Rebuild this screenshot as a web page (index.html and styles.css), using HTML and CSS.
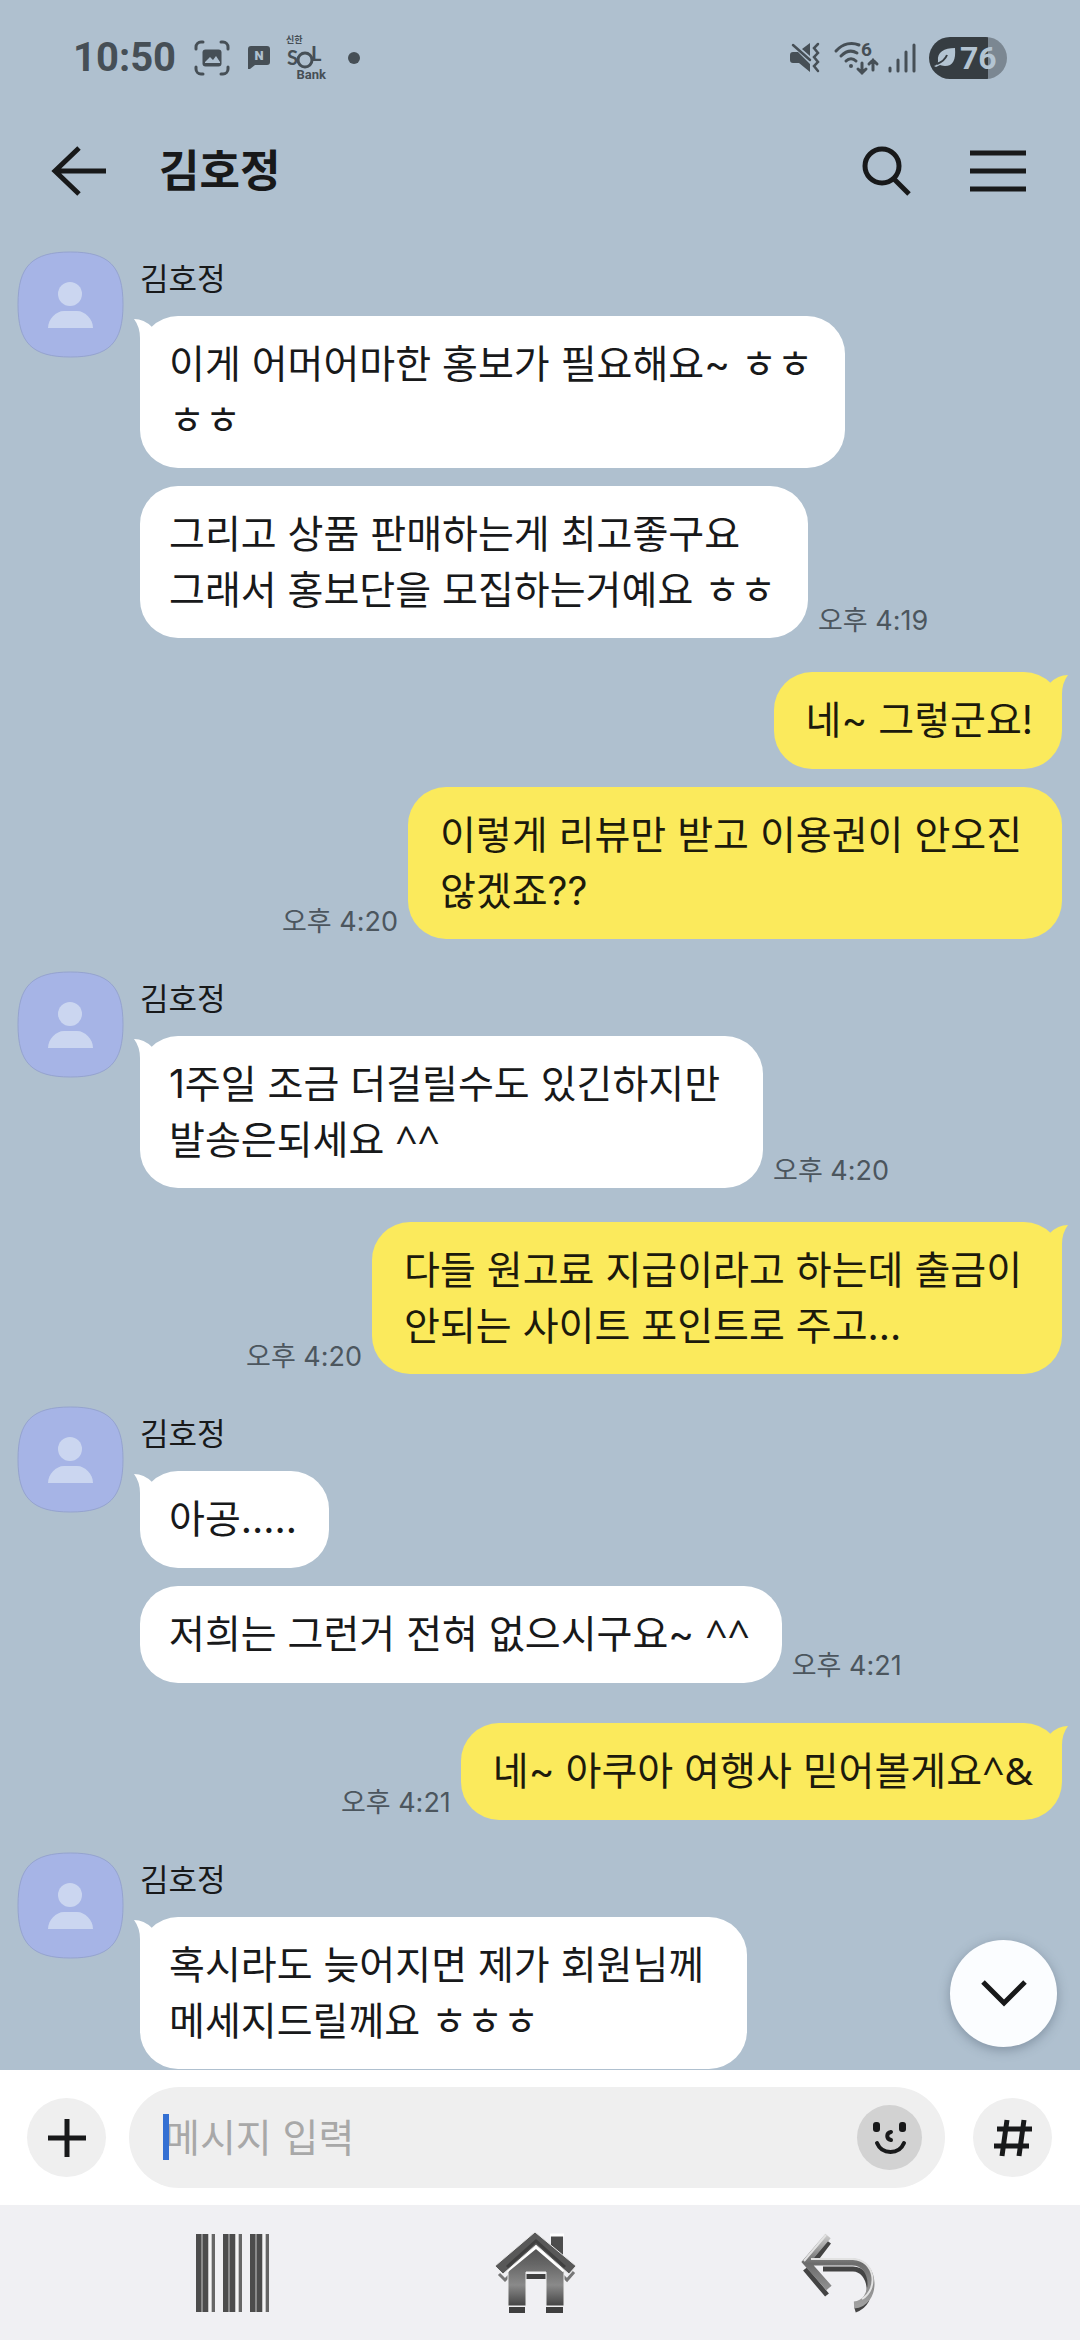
FILE: index.html
```html
<!DOCTYPE html>
<html lang="ko">
<head>
<meta charset="utf-8">
<meta name="viewport" content="width=device-width, initial-scale=1">
<title>김호정</title>
<link rel="stylesheet" href="styles.css">
</head>
<body>
<svg class="defs" width="0" height="0" aria-hidden="true">
  <defs>
    <linearGradient id="metal" x1="0" y1="0" x2="0" y2="1">
      <stop offset="0" stop-color="#505050"/><stop offset=".3" stop-color="#666"/><stop offset=".65" stop-color="#8a8a8a"/><stop offset="1" stop-color="#444"/>
    </linearGradient>
    <linearGradient id="steel" x1="0" y1="0" x2="0" y2="1">
      <stop offset="0" stop-color="#c8c8c8"/><stop offset=".4" stop-color="#6c6c6c"/><stop offset=".75" stop-color="#8e8e8e"/><stop offset="1" stop-color="#a0a0a0"/>
    </linearGradient>
    <symbol id="avatar" viewBox="0 0 107 107">
      <path d="M53.500 1C92 1 106 15 106 53.500S92 106 53.500 106 1 92 1 53.500 15 1 53.500 1z" fill="#a6b4e6" stroke="#95a3cf" stroke-width="1"/>
      <circle cx="53" cy="43" r="12" fill="#cbd6f0"/>
      <path d="M31 77c0-9 8-17 16-17h13c8 0 16 8 16 17z" fill="#cbd6f0"/>
    </symbol>
    <symbol id="tail" viewBox="0 0 28 40">
      <path d="M0 3Q10 3 18 11L28 40H6V22Q6 11 0 3z" fill="currentColor"/>
    </symbol>
  </defs>
</svg>

<div class="phone">
  <header class="top">
    <div class="status">
      <div class="status-side">
        <time class="clock">10:50</time>
        <svg class="ic-shot" width="36" height="36" viewBox="0 0 36 36" fill="none" stroke="#464f56" stroke-width="3" stroke-linecap="round"><path d="M2 9V7a5 5 0 0 1 5-5h2M27 2h2a5 5 0 0 1 5 5v2M34 27v2a5 5 0 0 1-5 5h-2M9 34H7a5 5 0 0 1-5-5v-2"/><rect x="8.500" y="9.500" width="19" height="17" rx="3" fill="#464f56" stroke="none"/><path d="M11 22l5-5 3 3 3-4 4 6v1H11z" fill="#afc0cf" stroke="none"/></svg>
        <svg class="ic-note" width="22" height="24" viewBox="0 0 22 24"><path d="M3 0h16a3 3 0 0 1 3 3v13a3 3 0 0 1-3 3H7l-5 4H0V3a3 3 0 0 1 3-3z" fill="#464f56"/><text class="n" x="11" y="14" text-anchor="middle">N</text></svg>
        <div class="bank"><span class="bank-top">신한</span>
          <svg width="40" height="24" viewBox="0 0 40 24"><text class="sol" x="1" y="20">S</text><circle cx="19" cy="15" r="7" fill="none" stroke="#464f56" stroke-width="3"/><text class="sol" x="25" y="16">L</text></svg>
          <span class="bank-name">Bank</span></div>
        <span class="dot"></span>
      </div>
      <div class="status-side">
        <svg width="30" height="30" viewBox="0 0 30 30" fill="#464f56"><path d="M3 9h5L20 21v8L9 20H3a3 3 0 0 1-3-3v-5a3 3 0 0 1 3-3zM20 0v13l-8-7z"/><path d="M3 2l17 15" stroke="#464f56" stroke-width="2.500" stroke-linecap="round"/><path d="M28 1l-4 4 4 5-4 4 4 5-4 4 4 5" fill="none" stroke="#464f56" stroke-width="2.500" stroke-linecap="round"/></svg>
        <svg class="ic-wifi" width="44" height="34" viewBox="0 0 44 34" fill="none" stroke="#464f56" stroke-width="3" stroke-linecap="round"><path d="M2 10C9 2 18 1 25 4M7 15c5-5 11-6 16-3M12 20c3-3 7-3 10 0"/><circle cx="17" cy="25" r="2" fill="#464f56" stroke="none"/><text class="six" x="27" y="15">6</text><path d="M28 22v10m-4-4l4 4 4-4M39 29V19m-4 4l4-4 4 4"/></svg>
        <svg class="ic-signal" width="28" height="30" viewBox="0 0 28 30" stroke="#464f56" stroke-width="3" stroke-linecap="round"><path d="M2 25v3M10 17v11M18 9v19M26 2v26"/></svg>
        <div class="battery"><svg width="22" height="20" viewBox="0 0 22 20"><path d="M21 0c1 12-2 18-10 18-3 0-4-1-5-1l-4 2-2-1C3 17 4 16 4 13 3 4 10 0 21 0z" fill="#b3c4d2"/><path d="M13 7c-2 5-5 7-10 9" fill="none" stroke="#363d42" stroke-width="2"/></svg><span>76</span></div>
      </div>
    </div>
    <div class="titlebar">
      <button class="icon-btn" aria-label="뒤로"><svg width="56" height="50" viewBox="0 0 56 50" fill="none" stroke="#18191a" stroke-width="5"><path d="M28 2L4 25l24 23M4 25h51"/></svg></button>
      <h1>김호정</h1>
      <button class="icon-btn" aria-label="검색"><svg width="50" height="50" viewBox="0 0 50 50" fill="none" stroke="#18191a" stroke-width="5"><circle cx="20" cy="20" r="17"/><path d="M32 33l15 15"/></svg></button>
      <button class="icon-btn" aria-label="메뉴"><svg width="56" height="42" viewBox="0 0 56 42" stroke="#18191a" stroke-width="5"><path d="M0 3h56M0 21h56M0 39h56"/></svg></button>
    </div>
  </header>

  <main class="chat">
    <section class="group them">
      <svg class="avatar"><use href="#avatar"/></svg>
      <div class="stack">
        <p class="name">김호정</p>
        <div class="row"><p class="bubble"><svg class="tail"><use href="#tail"/></svg>이게 어머어마한 홍보가 필요해요~ ㅎㅎ<br>ㅎㅎ</p></div>
        <div class="row"><p class="bubble">그리고 상품 판매하는게 최고좋구요<br>그래서 홍보단을 모집하는거예요 ㅎㅎ</p><time>오후 4:19</time></div>
      </div>
    </section>
    <section class="group me">
      <div class="row"><p class="bubble"><svg class="tail"><use href="#tail"/></svg>네~ 그렇군요!</p></div>
      <div class="row"><time>오후 4:20</time><p class="bubble">이렇게 리뷰만 받고 이용권이 안오진&nbsp;<br>않겠죠??</p></div>
    </section>
    <section class="group them">
      <svg class="avatar"><use href="#avatar"/></svg>
      <div class="stack">
        <p class="name">김호정</p>
        <div class="row"><p class="bubble"><svg class="tail"><use href="#tail"/></svg>1주일 조금 더걸릴수도 있긴하지만&nbsp;<br>발송은되세요 <span class="face">^^</span></p><time>오후 4:20</time></div>
      </div>
    </section>
    <section class="group me">
      <div class="row"><time>오후 4:20</time><p class="bubble"><svg class="tail"><use href="#tail"/></svg>다들 원고료 지급이라고 하는데 출금이&nbsp;<br>안되는 사이트 포인트로 주고...</p></div>
    </section>
    <section class="group them">
      <svg class="avatar"><use href="#avatar"/></svg>
      <div class="stack">
        <p class="name">김호정</p>
        <div class="row"><p class="bubble"><svg class="tail"><use href="#tail"/></svg>아공.....</p></div>
        <div class="row"><p class="bubble">저희는 그런거 전혀 없으시구요~ <span class="face">^^</span></p><time>오후 4:21</time></div>
      </div>
    </section>
    <section class="group me apart">
      <div class="row"><time>오후 4:21</time><p class="bubble"><svg class="tail"><use href="#tail"/></svg>네~ 아쿠아 여행사 믿어볼게요<span class="face">^&amp;</span></p></div>
    </section>
    <section class="group them">
      <svg class="avatar"><use href="#avatar"/></svg>
      <div class="stack">
        <p class="name">김호정</p>
        <div class="row"><p class="bubble"><svg class="tail"><use href="#tail"/></svg>혹시라도 늦어지면 제가 회원님께&nbsp;<br>메세지드릴께요 ㅎㅎㅎ</p></div>
      </div>
    </section>
    <button class="to-bottom" aria-label="맨 아래로"><svg width="48" height="30" viewBox="0 0 48 30" fill="none" stroke="#18191a" stroke-width="5"><path d="M3 3l21 21L45 3"/></svg></button>
  </main>

  <form class="composer">
    <button class="round" type="button" aria-label="첨부"><svg width="38" height="38" viewBox="0 0 38 38" stroke="#18191a" stroke-width="5"><path d="M19 0v38M0 19h38"/></svg></button>
    <div class="field">
      <span class="caret"></span>
      <input type="text" aria-label="메시지 입력" placeholder="메시지 입력">
      <button class="emoji" type="button" aria-label="이모티콘"><svg width="34" height="34" viewBox="0 0 34 34"><rect x="0" y="1" width="7" height="10" rx="3" fill="#18191a"/><rect x="26" y="1" width="7" height="10" rx="3" fill="#18191a"/><path d="M18 11c-5 1-5 7 0 8" fill="none" stroke="#18191a" stroke-width="4" stroke-linecap="round"/><path d="M4 22c5 12 22 12 27 0" fill="none" stroke="#18191a" stroke-width="4" stroke-linecap="round"/></svg></button>
    </div>
    <button class="round" type="button" aria-label="샵 검색"><svg width="38" height="38" viewBox="0 0 38 38" fill="none" stroke="#18191a" stroke-width="5"><path d="M13 1L8 37M30 1l-5 36M3 10h35M0 27h35"/></svg></button>
  </form>

  <nav class="sysnav">
    <button aria-label="최근 앱"><svg width="74" height="78" viewBox="0 0 74 78" fill="#4c4c4c"><g id="bars"><rect width="19" height="78" fill="#c4c4c5"/><rect width="5" height="78"/><rect x="5" width="2" height="78" fill="#8a8a8a"/><rect x="7" width="5" height="78"/><rect x="13" width="2" height="78" fill="#f4f4f4"/><rect x="16" width="3" height="78" fill="#666"/></g><use href="#bars" x="27"/><use href="#bars" x="54"/></svg></button>
    <button aria-label="홈"><svg width="82" height="82" viewBox="0 0 82 82">
      <path d="M56 3h12v22L56 15z" fill="#4c4c4c"/><path d="M55 3h14" stroke="#fff" stroke-width="3"/>
      <path d="M14 75h16v6H14zM51 75h17v6H51zM31 42h20v5H31z" fill="#3f3f3f"/>
      <path d="M4 42l6 6 6-6M66 42l6 6 7-8" fill="none" stroke="#777" stroke-width="3"/>
      <path d="M13 37L41 14l28 24v36H51V40H31v34H13z" fill="url(#metal)" stroke="#eee" stroke-width="1"/>
      <path d="M12 39L41 15l28 24" fill="none" stroke="#fff" stroke-width="3"/>
      <path d="M0 34L40 0l41 34-7 8L41 13 8 42z" fill="#585858" stroke="#e8e8e8" stroke-width="1"/>
      <path d="M12 35L41 9l29 26" fill="none" stroke="#404040" stroke-width="3"/>
    </svg></button>
    <button aria-label="뒤로 가기"><svg width="75" height="84" viewBox="0 0 75 84" fill="none">
      <path d="M28 11L12 32M4 38l22 26M22 38h30c18 0 24 34 2 41" stroke="#444" stroke-width="5"/>
      <path d="M27 5L5 31l23 26M7 31h44c25 0 25 42 2 43" stroke="url(#steel)" stroke-width="7"/>
      <path d="M25 4L3 30M10 28h42c22 1 26 30 9 40" stroke="#e2e2e2" stroke-width="2"/>
    </svg></button>
  </nav>
</div>
</body>
</html>
```
FILE: styles.css
```css
* { box-sizing: border-box; }
body {
  margin: 0;
  background: #afc0cf;
  color: #18191a;
  font-family: Inter, "Noto Sans CJK KR", "Noto Sans", sans-serif;
}
h1, p { margin: 0; }
button { padding: 0; border: 0; background: none; display: grid; place-items: center; }
svg { display: block; overflow: visible; }
.defs { position: absolute; }
.phone { min-height: 100vh; display: flex; flex-direction: column; }

/* status bar and title */
.top { flex: none; }
.status { display: flex; justify-content: space-between; height: 116px; padding: 0 73px; color: #464f56; }
.status-side { display: flex; align-items: center; }
.clock { font: 700 40px/48px Roboto, sans-serif; }
.ic-shot { margin-left: 18px; }
.ic-note { margin-left: 18px; }
.n { font: 900 13px Roboto, sans-serif; fill: #afc0cf; }
.bank { display: grid; margin-left: 16px; width: 40px; line-height: 10px; }
.bank-top { font-family: "Noto Sans CJK KR", sans-serif; font-size: 9px; font-weight: 700; }
.bank-name { justify-self: end; font: 700 13px/12px Roboto, sans-serif; }
.sol { font: 700 20px Lato, sans-serif; fill: #464f56; }
.six { font: 700 19px Roboto, sans-serif; fill: #464f56; stroke: none; }
.dot { width: 12px; height: 12px; margin-left: 22px; border-radius: 50%; background: #464f56; }
.ic-wifi { margin-left: 14px; }
.ic-signal { margin-left: 10px; }
.battery {
  display: flex; align-items: center; gap: 4px;
  width: 78px; height: 42px; margin-left: 13px; padding-left: 5px;
  border-radius: 21px;
  background: linear-gradient(90deg, #363d42 75%, #7b8792 75%);
  color: #b3c4d2; font: 700 32px/42px Roboto, sans-serif;
}
.titlebar { display: flex; align-items: center; height: 110px; padding: 0 54px 0 51px; }
.titlebar h1 { flex: 1; margin-left: 52px; font-size: 44px; line-height: 60px; font-weight: 700; }
.icon-btn + .icon-btn { margin-left: 58px; }

/* conversation */
.chat { position: relative; flex: 1; padding: 25px 18px 1px 17px; }
.group.them { display: flex; margin-top: 32px; }
.group.them:first-child { margin-top: 0; }
.group.me { margin-top: 34px; }
.group.apart { margin-top: 40px; }
.avatar { flex: none; width: 107px; height: 107px; margin-right: 16px; }
.name { height: 65px; padding-top: 8px; font-size: 31px; line-height: 40px; }
.row { display: flex; align-items: flex-end; gap: 10px; }
.row + .row { margin-top: 18px; }
.me .row { justify-content: flex-end; }
.bubble {
  position: relative;
  min-height: 97px; padding: 20px 32px 20px 29px;
  border-radius: 38px;
  background: #fff;
  font-size: 39px; line-height: 56px;
}
.me .bubble { background: #fbea5c; color: #1c1a0c; padding: 20px 29px 20px 32px; }
.face { font-family: "Noto Sans", sans-serif; line-height: 1; }
.tail { position: absolute; top: 0; left: -6px; width: 28px; height: 40px; color: #fff; }
.me .tail { left: auto; right: -6px; color: #fbea5c; transform: scaleX(-1); }
.row time { font-size: 27px; line-height: 34px; color: #4c565e; }
.to-bottom {
  position: absolute; right: 23px; bottom: 23px;
  width: 107px; height: 107px; border-radius: 50%;
  background: #fbfdff; box-shadow: 0 3px 12px rgba(60, 75, 95, .4);
}

/* message box */
.composer { display: flex; align-items: center; height: 135px; padding: 0 28px 0 27px; background: #fff; }
.round { flex: none; width: 79px; height: 79px; border-radius: 50%; background: #efefef; }
.field {
  position: relative; flex: 1; display: flex; align-items: center;
  height: 101px; margin: 0 28px 0 23px; padding: 0 23px 0 35px;
  border-radius: 51px; background: #efefef;
}
.field input { flex: 1; min-width: 0; padding: 0; border: 0; outline: 0; background: none; font: inherit; font-size: 39px; line-height: 56px; }
.field input::placeholder { color: #a8a8a8; opacity: 1; }
.caret { position: absolute; left: 34px; top: 27px; width: 6px; height: 46px; background: #3470d3; }
.emoji { width: 65px; height: 65px; border-radius: 50%; background: #d2d2d2; }

/* system navigation */
.sysnav { display: flex; justify-content: space-between; align-items: center; height: 135px; padding: 0 204px 0 196px; background: #f0f0f3; }
```
